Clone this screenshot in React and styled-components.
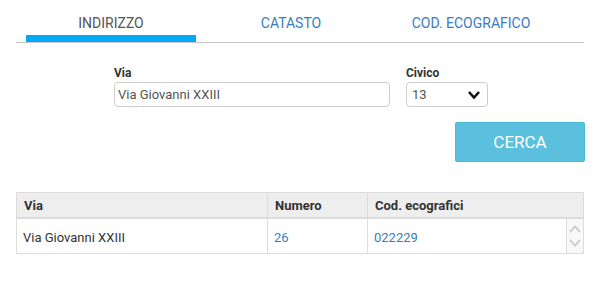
import styled, { createGlobalStyle } from "styled-components";

const GlobalStyle = createGlobalStyle`
  body {
    margin: 0;
    background: #fff;
    font-family: Roboto, "Liberation Sans", Arial, sans-serif;
    color: #333;
  }
`;

const Page = styled.div`
  width: 598px;
  height: 292px;
  padding-left: 16px;
  box-sizing: border-box;
`;

const Tabs = styled.div`
  display: flex;
  width: 568px;
  padding-left: 5px;
  box-sizing: border-box;
  border-bottom: 1px solid #c6c6c6;
`;

const Tab = styled.div`
  width: 180px;
  height: 42px;
  display: flex;
  flex-direction: column;
  align-items: center;
  padding-top: 15px;
  box-sizing: border-box;
  font-size: 14px;
  line-height: 16px;
  text-transform: uppercase;
  color: ${props => (props.$active ? "#555" : "#3b7bc0")};
  cursor: pointer;

  &::after {
    content: "";
    margin-top: auto;
    align-self: stretch;
    margin-left: 5px;
    margin-right: 5px;
    height: 7px;
    background: ${props => (props.$active ? "#03a9f4" : "transparent")};
  }
`;

const Form = styled.div`
  display: flex;
  gap: 16px;
  padding-left: 98px;
  margin-top: 23px;
`;

const Field = styled.div`
  display: flex;
  flex-direction: column;
  gap: 2px;
  width: ${props => props.$width}px;
`;

const Label = styled.label`
  font-size: 12px;
  line-height: 14px;
  font-weight: 700;
  color: #333;
`;

const Input = styled.input`
  height: 25px;
  box-sizing: border-box;
  border: 1px solid #ccc;
  border-radius: 4px;
  padding: 0 3px;
  font-family: inherit;
  font-size: 13px;
  color: #555;
  outline: none;
`;

const Select = styled.div`
  height: 25px;
  box-sizing: border-box;
  border: 1px solid #ccc;
  border-radius: 4px;
  padding: 0 6px 0 5px;
  display: flex;
  align-items: center;
  justify-content: space-between;
  font-size: 13px;
  color: #555;
`;

const ButtonRow = styled.div`
  width: 569px;
  display: flex;
  justify-content: flex-end;
  margin-top: 15px;
`;

const SearchButton = styled.button`
  width: 130px;
  height: 40px;
  background: #5bc0de;
  border: 1px solid #4bbad9;
  border-radius: 2px;
  color: #fff;
  font-family: inherit;
  font-size: 17px;
  cursor: pointer;
`;

const Table = styled.div`
  width: 568px;
  margin-top: 30px;
  border: 1px solid #ddd;
  box-sizing: border-box;
`;

const Row = styled.div`
  display: grid;
  grid-template-columns: ${props => (props.$head ? "250px 100px 1fr" : "250px 100px 1fr 17px")};
  height: ${props => (props.$head ? "24px" : "34px")};
  background: ${props => (props.$head ? "#eee" : "#fff")};
  border-bottom: ${props => (props.$head ? "2px solid #ddd" : "none")};
`;

const Cell = styled.div`
  display: flex;
  align-items: center;
  padding: ${props => (props.$head ? "0 7px" : "2px 6px 0")};
  border-left: ${props => (props.$first ? "none" : "1px solid #ddd")};
  font-size: 13px;
  font-weight: ${props => (props.$head ? 700 : 400)};
  color: ${props => (props.$link ? "#3b7bc0" : "#333")};
`;

const Scroll = styled.div`
  border-left: 1px solid #ddd;
  background: #f8f8f8;
  display: flex;
  flex-direction: column;
  align-items: center;
  justify-content: center;
  gap: 6px;
`;

const Chevron = ({ up, color = "#c6c6c6", width = 12, height = 8, stroke = 1.6 }) => (
  <svg width={width} height={height} viewBox="0 0 12 8">
    <path
      d={up ? "M1 7 L6 1.5 L11 7" : "M1 1 L6 6.5 L11 1"}
      fill="none"
      stroke={color}
      strokeWidth={stroke}
    />
  </svg>
);

export default function App() {
  return (
    <Page>
      <GlobalStyle />
      <Tabs>
        <Tab $active>Indirizzo</Tab>
        <Tab>Catasto</Tab>
        <Tab>Cod. Ecografico</Tab>
      </Tabs>

      <Form>
        <Field $width={276}>
          <Label>Via</Label>
          <Input defaultValue="Via Giovanni XXIII" />
        </Field>
        <Field $width={82}>
          <Label>Civico</Label>
          <Select>
            <span>13</span>
            <Chevron color="#111" width={14} height={8} stroke={2.6} />
          </Select>
        </Field>
      </Form>

      <ButtonRow>
        <SearchButton>CERCA</SearchButton>
      </ButtonRow>

      <Table>
        <Row $head>
          <Cell $head $first>Via</Cell>
          <Cell $head>Numero</Cell>
          <Cell $head>Cod. ecografici</Cell>
        </Row>
        <Row>
          <Cell $first>Via Giovanni XXIII</Cell>
          <Cell $link>26</Cell>
          <Cell $link>022229</Cell>
          <Scroll>
            <Chevron up />
            <Chevron />
          </Scroll>
        </Row>
      </Table>
    </Page>
  );
}
